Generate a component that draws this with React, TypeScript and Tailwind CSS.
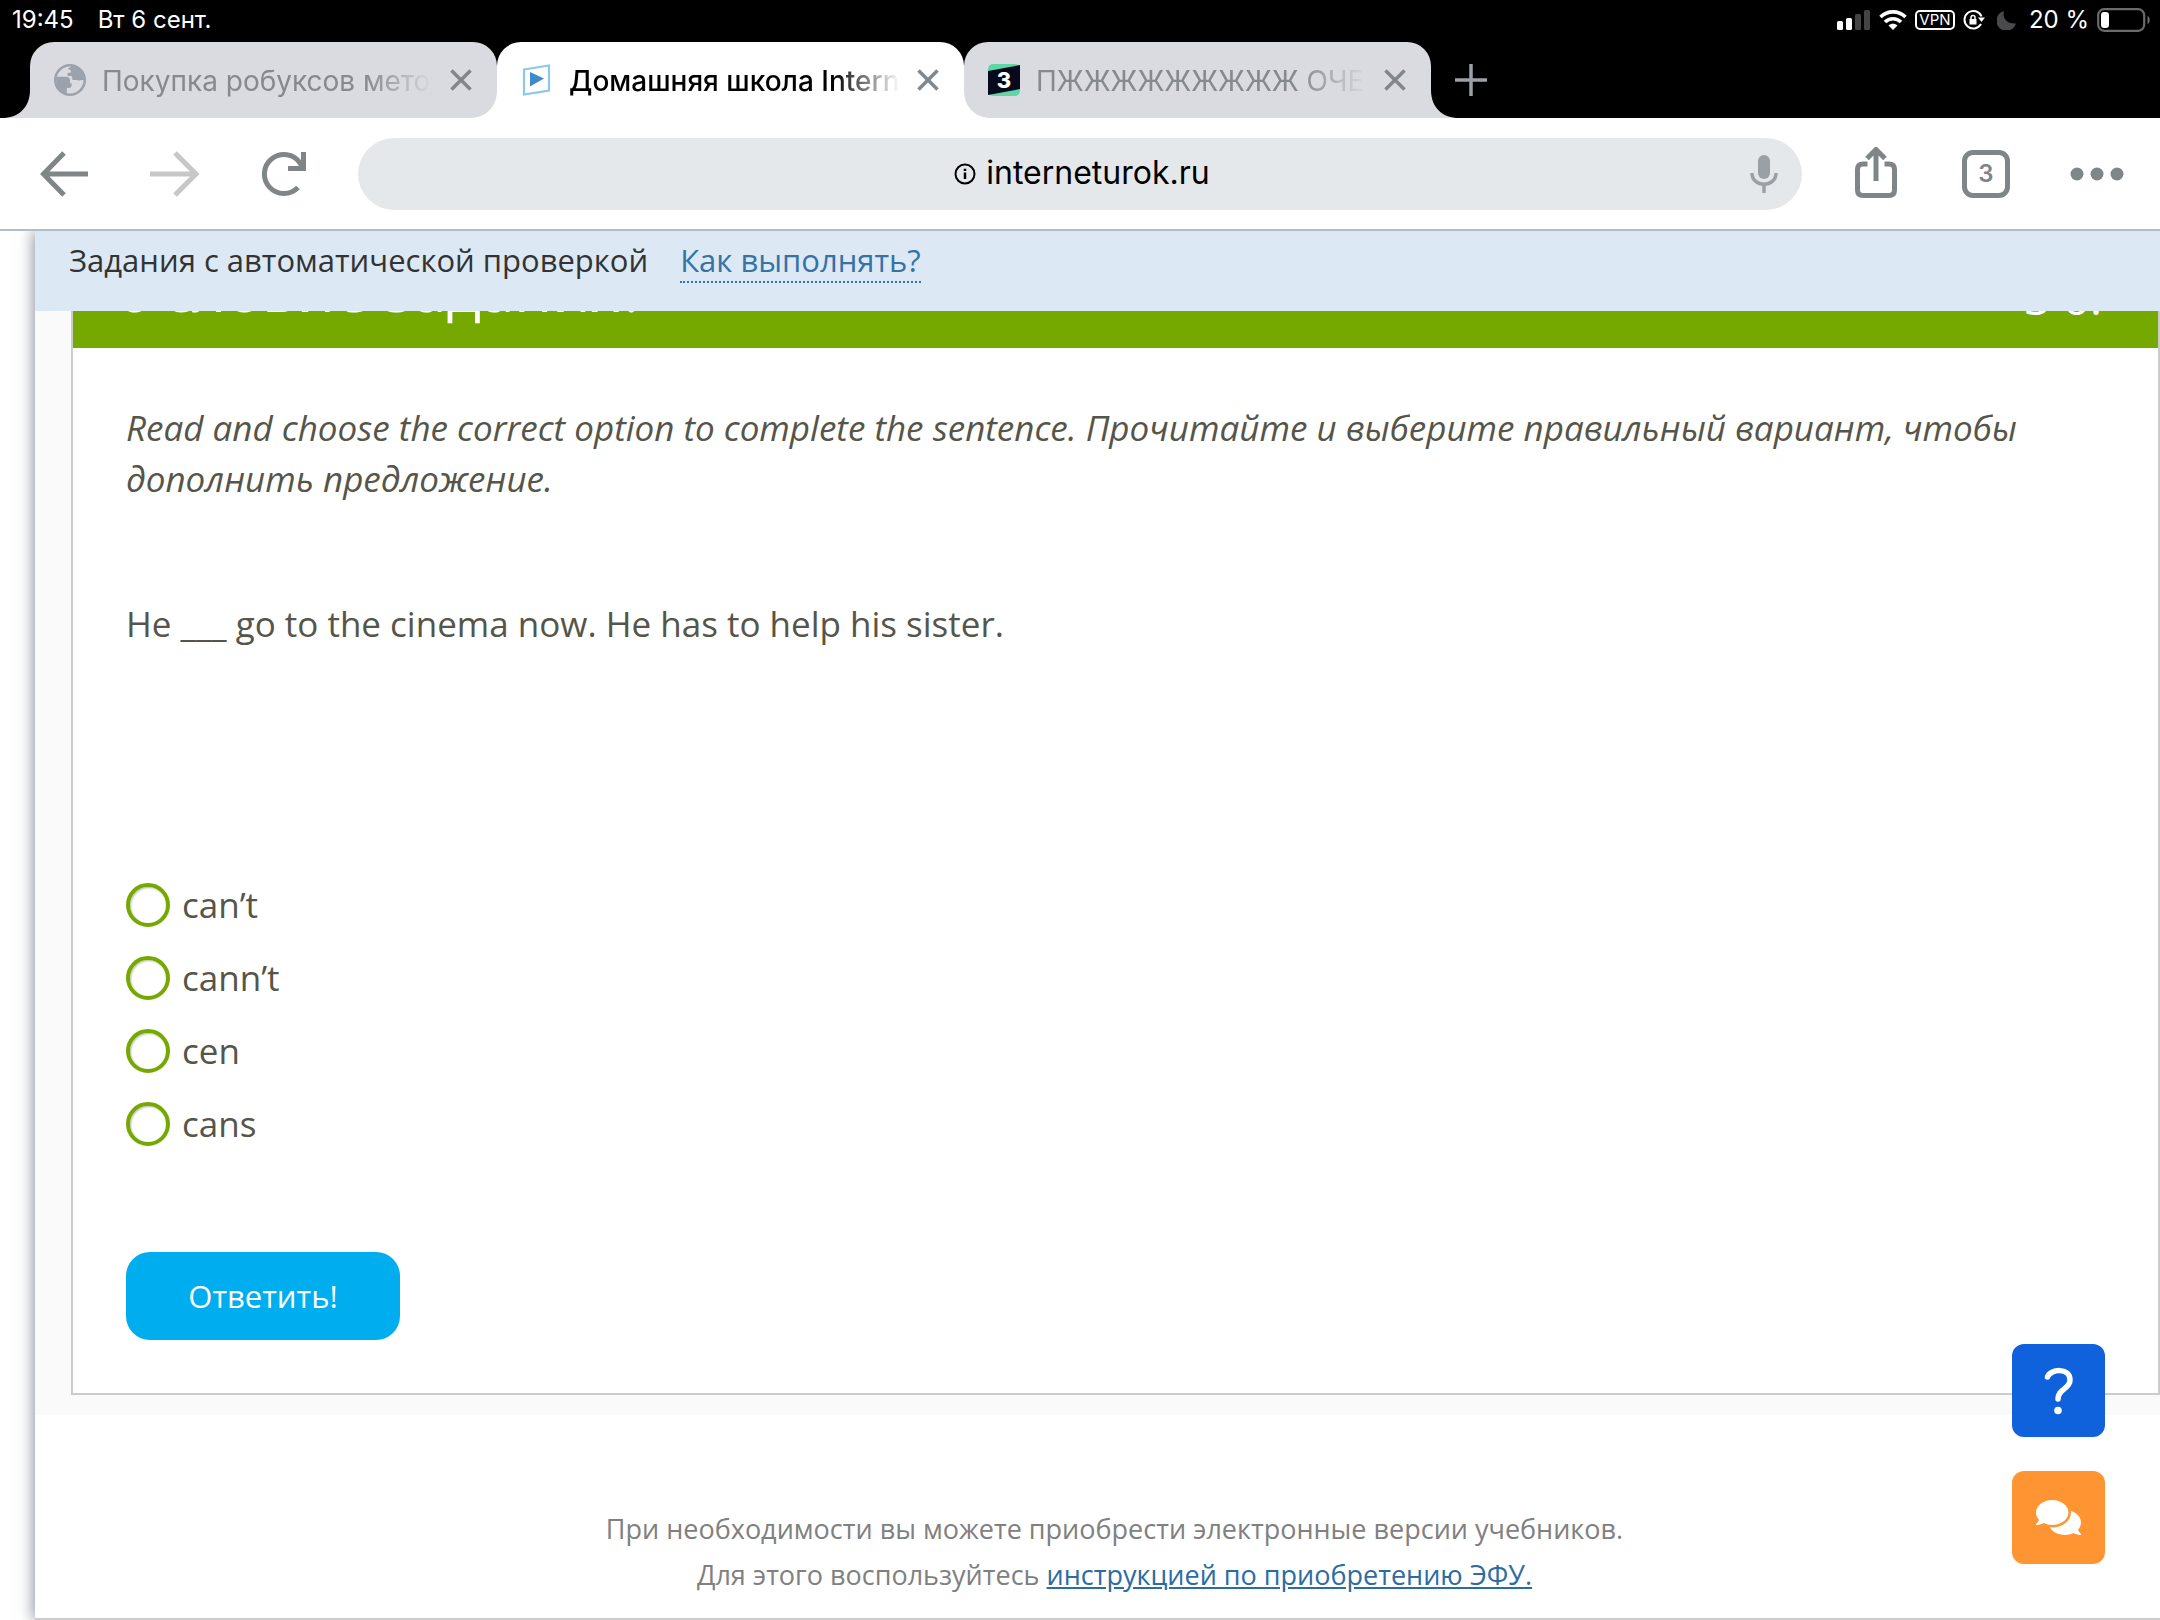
import { useState } from 'react';
import { FaComments } from 'react-icons/fa';

const TABS = [
  { title: 'Покупка робуксов методом', icon: 'globe', active: false },
  { title: 'Домашняя школа InternetUrok', icon: 'school', active: true },
  { title: 'ПЖЖЖЖЖЖЖЖЖ ОЧЕНЬ', icon: 'three', active: false },
];

const OPTIONS = ['can’t', 'cann’t', 'cen', 'cans'];

function TabIcon({ name }: { name: string }) {
  if (name === 'globe') {
    return (
      <svg viewBox="2 2 20 20" className="size-8 shrink-0" fill="#9ba2ab">
        <circle cx="12" cy="12" r="9.2" fill="none" stroke="#9ba2ab" strokeWidth="1.6" />
        <path d="M3.500 10H9.500Q12 10 12 12.500V14H13V15.500Q13 17 11.500 17H10V20.600C5 20 3 15 3.500 10Z" />
        <path d="M13 3.200C17.500 3.500 20.800 7.500 20.800 12C18 12 17.500 12.800 16.500 12H13.500V10.500Q13.500 9.500 12.500 9.500H10.500V7.500H12.500V6Q12.500 5.500 11 5.500V4.500Q12 4.500 13 3.200Z" />
      </svg>
    );
  }
  if (name === 'school') {
    return (
      <svg viewBox="0 0 32 32" className="size-8 shrink-0">
        <path d="M3 5.500L28 1.500V26.500L3 30.500Z" fill="#fff" stroke="#8cc8ee" strokeWidth="2.200" />
        <path d="M9 8L23 14.500L9 22.500Z" fill="#3f8acb" />
      </svg>
    );
  }
  return (
    <span className="relative flex size-8 shrink-0 items-center justify-center">
      <svg viewBox="0 0 32 32" className="absolute inset-0 size-8">
        <rect width="32" height="32" rx="5" fill="#5fd6a6" />
        <path d="M0 7L32 1V25L0 31Z" fill="#060a1c" />
      </svg>
      <span className="relative text-[22px] leading-8 font-extrabold text-white">3</span>
    </span>
  );
}

function Flare({ className }: { className: string }) {
  return (
    <svg viewBox="0 0 28 28" className={className}>
      <path d="M28 0V28H0C16 28 28 18 28 0Z" fill="currentColor" />
    </svg>
  );
}

function Tab({ title, icon, active, first, last }: { title: string; icon: string; active: boolean; first: boolean; last: boolean }) {
  return (
    <div
      className={
        active
          ? 'relative z-10 flex h-[76px] w-[467px] items-center gap-4 rounded-t-3xl bg-white px-6 text-black'
          : 'relative flex h-[76px] w-[467px] items-center gap-4 rounded-t-3xl bg-[#dadbe0] px-6 text-[#858a8e]'
      }
    >
      {(active || first) && (
        <Flare className={active ? 'absolute bottom-0 -left-7 size-7 text-white' : 'absolute bottom-0 -left-7 size-7 text-[#dadbe0]'} />
      )}
      <TabIcon name={icon} />
      <span
        className={
          active
            ? 'flex-1 overflow-hidden pt-[2px] text-[28px] leading-8 font-medium whitespace-nowrap [mask-image:linear-gradient(to_right,black_80%,transparent)]'
            : 'flex-1 overflow-hidden pt-[2px] text-[28px] leading-8 whitespace-nowrap [mask-image:linear-gradient(to_right,black_80%,transparent)]'
        }
      >
        {title}
      </span>
      <button aria-label="Закрыть вкладку" className="text-[#80868b]">
        <svg viewBox="0 0 24 24" className="size-6" fill="none" stroke="currentColor" strokeWidth="3.500">
          <path d="M2.500 2.500L21.500 21.500M21.500 2.500L2.500 21.500" />
        </svg>
      </button>
      {(active || last) && (
        <Flare className={active ? 'absolute -right-7 bottom-0 size-7 -scale-x-100 text-white' : 'absolute -right-7 bottom-0 size-7 -scale-x-100 text-[#dadbe0]'} />
      )}
    </div>
  );
}

function StatusBar() {
  return (
    <div className="flex h-[42px] items-center justify-between pr-[9px] pb-[2px] pl-3 text-[24px] leading-8 text-white">
      <div className="flex gap-6">
        <span>19:45</span>
        <span>Вт 6 сент.</span>
      </div>
      <div className="flex items-center gap-2">
        <svg viewBox="0 0 34 20" className="h-5 w-[34px]" fill="#fff">
          <rect y="11" width="6" height="9" rx="1.500" />
          <rect x="9" y="8" width="6" height="12" rx="1.500" />
          <rect x="18" y="4" width="6" height="16" rx="1.500" fill="#444" />
          <rect x="27" width="6" height="20" rx="1.500" fill="#444" />
        </svg>
        <svg viewBox="0 0 28 20" className="h-5 w-7" fill="none" stroke="#fff" strokeWidth="3.600">
          <path d="M1.500 7C8.500 0.200 19.500 0.200 26.500 7" />
          <path d="M6 12C10.500 7.600 17.500 7.600 22 12" />
          <path d="M14 20L9.500 15.500C12 13 16 13 18.500 15.500Z" fill="#fff" stroke="none" />
        </svg>
        <span className="flex h-5 w-10 items-center justify-center rounded-[5px] border-2 border-white text-[15px]">VPN</span>
        <svg viewBox="0 0 22 22" className="size-[22px]" fill="none" stroke="#fff" strokeWidth="2">
          <path d="M18 15A8.800 8.800 0 1 1 18.500 7.500" />
          <path d="M15 8.500H22L18.500 13Z" fill="#fff" stroke="none" />
          <path d="M6.500 10H13.500V15.500H6.500Z" fill="#fff" stroke="none" />
          <path d="M8 10V8.500a2 2 0 0 1 4 0V10" strokeWidth="1.500" />
        </svg>
        <svg viewBox="0 0 20 20" className="ml-1 size-5" fill="#4a4a4c">
          <path d="M7 1C5 8 10 14.500 19 13.500A10 10 0 1 1 7 1Z" />
        </svg>
        <span className="ml-1">20 %</span>
        <svg viewBox="0 0 54 24" className="h-6 w-[54px]">
          <rect x="1.200" y="1.200" width="46" height="21.600" rx="6" fill="none" stroke="#6b6b6d" strokeWidth="2.200" />
          <rect x="4" y="4" width="8" height="16" rx="3" fill="#fff" />
          <path d="M50.500 8c3 1 3 7 0 8z" fill="#6b6b6d" />
        </svg>
      </div>
    </div>
  );
}

function Toolbar() {
  return (
    <div className="flex h-[113px] items-center border-b-2 border-[#b4bdc5] bg-white pr-9 pl-10 text-[#808688]">
      <button aria-label="Назад">
        <svg viewBox="0 0 50 46" className="h-[46px] w-[50px]" fill="none" stroke="currentColor" strokeWidth="5">
          <path d="M48 23H4M24 2L3.500 23L24 44" />
        </svg>
      </button>
      <button aria-label="Вперёд" className="ml-[60px] text-[#c7c7c7]">
        <svg viewBox="0 0 50 46" className="h-[46px] w-[50px]" fill="none" stroke="currentColor" strokeWidth="5">
          <path d="M0 23H46M25 2L46 23L25 44" />
        </svg>
      </button>
      <button aria-label="Обновить" className="ml-[60px]">
        <svg viewBox="0 0 48 46" className="h-[46px] w-12" fill="none" stroke="currentColor" strokeWidth="5">
          <path d="M38 36.500A19.500 19.500 0 1 1 40 12L43.500 17M43.500 1V17.500H28" />
        </svg>
      </button>
      <div className="ml-[50px] flex h-[72px] flex-1 items-center rounded-full bg-[#e5e8eb] pr-6 pl-14">
        <div className="flex flex-1 items-center justify-center gap-[10px] text-black">
          <svg viewBox="0 0 22 22" className="size-[22px]" fill="none" stroke="currentColor" strokeWidth="2">
            <circle cx="11" cy="11" r="9.500" />
            <path d="M11 9.500V16M11 5.800V8" strokeWidth="2.500" />
          </svg>
          <span className="pb-[2px] text-[32px] leading-10">interneturok.ru</span>
        </div>
        <button aria-label="Голосовой поиск" className="text-[#9aa0a6]">
          <svg viewBox="0 0 28 40" className="h-10 w-7" fill="none" stroke="currentColor" strokeWidth="3.500">
            <rect x="8" y="1" width="12" height="24" rx="6" fill="currentColor" stroke="none" />
            <path d="M2 19C2 34 26 34 26 19M14 30V39" />
          </svg>
        </button>
      </div>
      <button aria-label="Поделиться" className="ml-[52px]">
        <svg viewBox="0 0 44 54" className="h-[54px] w-11" fill="none" stroke="currentColor" strokeWidth="5">
          <path d="M13.500 17H9Q3.500 17 3.500 22.500V43Q3.500 48.500 9 48.500H35Q40.500 48.500 40.500 43V22.500Q40.500 17 35 17H30.500M22 34V3M13 11.500L22 2.500L31 11.500" />
        </svg>
      </button>
      <button className="ml-16 flex size-12 items-center justify-center rounded-[11px] border-5 border-current text-[24px] font-semibold">3</button>
      <button aria-label="Меню" className="ml-[60px]">
        <svg viewBox="0 0 54 14" className="h-[14px] w-[54px]" fill="currentColor">
          <circle cx="7" cy="7" r="6.500" />
          <circle cx="27" cy="7" r="6.500" />
          <circle cx="47" cy="7" r="6.500" />
        </svg>
      </button>
    </div>
  );
}

export default function App() {
  const [answer, setAnswer] = useState('');

  return (
    <div className="flex h-screen flex-col overflow-hidden bg-white font-['Inter',sans-serif]">
      <header className="relative z-20 bg-black">
        <StatusBar />
        <div className="flex pl-[30px]">
          {TABS.map((tab, i) => (
            <Tab key={tab.title} {...tab} first={i === 0} last={i === TABS.length - 1} />
          ))}
          <button aria-label="Новая вкладка" className="ml-6 text-[#9aa0a6]">
            <svg viewBox="0 0 32 32" className="size-8" fill="none" stroke="currentColor" strokeWidth="3.500">
              <path d="M16 0V32M0 16H32" />
            </svg>
          </button>
        </div>
        <Toolbar />
      </header>

      <main className="ml-[35px] flex flex-1 flex-col border-b-2 border-[#ccc] bg-white font-['Open_Sans',sans-serif] text-[#555549] shadow-[-2px_0_14px_rgba(70,80,95,0.6)]">
        <div className="relative z-10 flex h-20 shrink-0 gap-8 bg-[#dce9f4] pt-2 pl-[34px] text-[31px] leading-[42px] text-[#333]">
          <span>Задания с автоматической проверкой</span>
          <a href="#help" className="self-start border-b-2 border-dotted border-[#3572a5] text-[#3572a5]">
            Как выполнять?
          </a>
        </div>

        <section className="bg-[#fafafa] pb-5 pl-9">
          {/* the card is scrolled a little under the sticky bar */}
          <div className="-mt-20 border-2 border-[#ccc] bg-white">
            <div className="flex h-[115px] items-end justify-between bg-[#76a900] pr-14 pb-[22px] pl-[53px] text-white">
              <h1 className="text-[60px] leading-[74px]">Условие задания:</h1>
              <span className="text-[46px] leading-[58px]">3 б.</span>
            </div>
            <div className="px-[53px] pt-[54px] pb-[53px] text-[35px] leading-[51px]">
              <p className="italic">
                Read and choose the correct option to complete the sentence. Прочитайте и выберите правильный вариант, чтобы дополнить предложение.
              </p>
              <p className="mt-[94px]">He ___ go to the cinema now. He has to help his sister.</p>
              <form onSubmit={(e) => e.preventDefault()}>
                <div className="mt-[230px] flex flex-col gap-[22px]">
                  {OPTIONS.map((option) => (
                    <label key={option} className="flex items-center gap-3">
                      <input
                        type="radio"
                        name="answer"
                        value={option}
                        checked={answer === option}
                        onChange={() => setAnswer(option)}
                        className="size-11 appearance-none rounded-full border-4 border-[#76a900] bg-white shadow-[inset_1px_1px_2px_#bbb] checked:bg-[#76a900]"
                      />
                      {option}
                    </label>
                  ))}
                </div>
                <button className="mt-[103px] flex h-[88px] w-[274px] items-center justify-center rounded-3xl bg-[#00adef] text-[31px] text-white">
                  Ответить!
                </button>
              </form>
            </div>
          </div>
        </section>

        <footer className="pt-[91px] pl-[34px] text-center text-[27px] leading-[46px] text-[#808080]">
          <p>При необходимости вы можете приобрести электронные версии учебников.</p>
          <p>
            Для этого воспользуйтесь{' '}
            <a href="#efu" className="text-[#2c6ca3] underline">
              инструкцией по приобретению ЭФУ.
            </a>
          </p>
        </footer>
      </main>

      <div className="fixed right-[55px] bottom-14 z-30 flex flex-col items-center gap-[34px]">
        <button aria-label="Помощь" className="flex size-[93px] items-center justify-center rounded-xl bg-[#0f62db] text-white">
          <svg viewBox="0 0 30 48" className="h-12 w-[30px]" fill="none" stroke="currentColor" strokeWidth="5.500" strokeLinecap="round">
            <path d="M3.500 10C6 2 26 0 26 13C26 22 14 22 14 32" />
            <circle cx="14" cy="43.500" r="3.800" fill="currentColor" stroke="none" />
          </svg>
        </button>
        <button aria-label="Чат" className="flex size-[93px] items-center justify-center rounded-xl bg-[#ff9433] text-white">
          <FaComments className="size-[45px]" />
        </button>
      </div>
    </div>
  );
}
